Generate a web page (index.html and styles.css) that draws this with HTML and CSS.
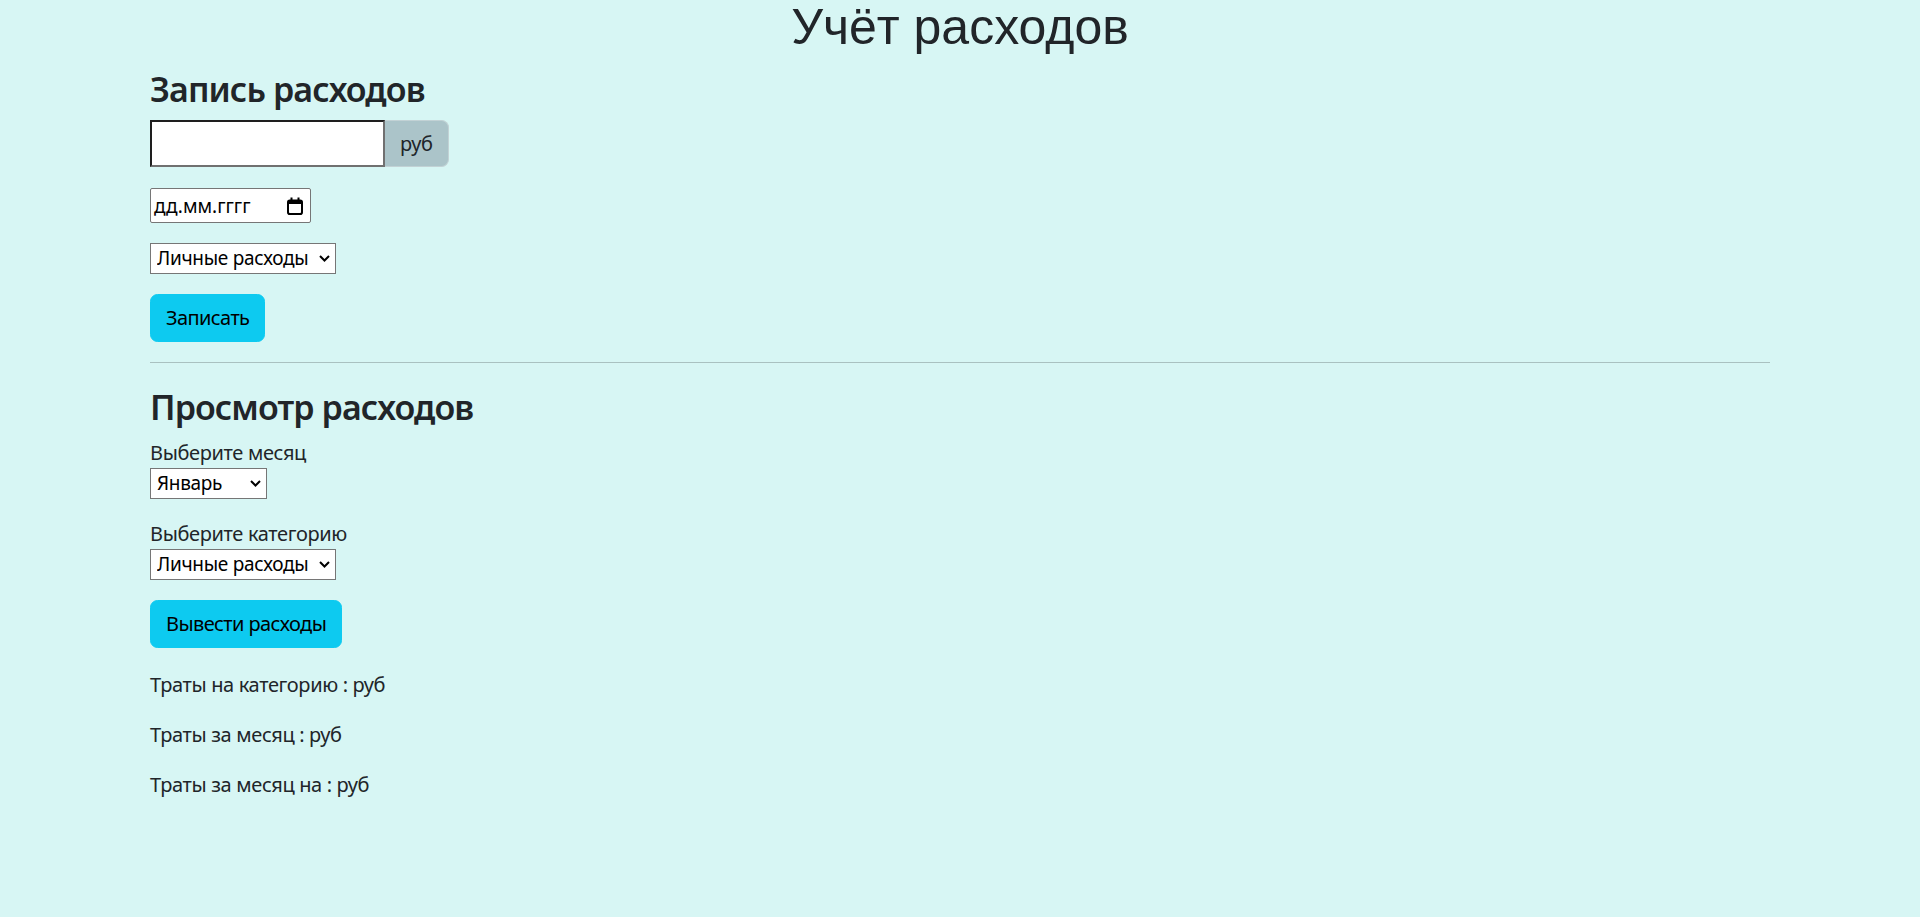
FILE: index.html
```html
<!DOCTYPE html>
<html lang="ru">
<head>
<meta charset="utf-8">
<title>Учёт расходов</title>
<link rel="stylesheet" href="styles.css">
</head>
<body>
<h1 class="title">Учёт расходов</h1>
<main class="container">
  <section class="record">
    <h3 class="section-title">Запись расходов</h3>
    <div class="input-group">
      <input type="text" class="amount">
      <span class="input-group-text">руб</span>
    </div>
    <div class="date-field">
      <span class="date-text">дд.мм.гггг</span>
      <svg class="cal-icon" width="16" height="18" viewBox="0 0 16 18" aria-hidden="true">
        <rect x="1" y="3.5" width="14" height="13.5" rx="1.8" fill="none" stroke="#000" stroke-width="2"/>
        <rect x="1" y="3" width="14" height="4" fill="#000"/>
        <rect x="3.5" y="0.5" width="2" height="4" fill="#000"/>
        <rect x="10.5" y="0.5" width="2" height="4" fill="#000"/>
      </svg>
    </div>
    <div class="select-wrap wide">
      <select class="select"><option>Личные расходы</option></select>
      <svg class="chevron" width="11" height="7" viewBox="0 0 11 7" aria-hidden="true"><path d="M1 1 L5.5 5.5 L10 1" fill="none" stroke="#000" stroke-width="2"/></svg>
    </div>
    <button class="btn">Записать</button>
  </section>
  <hr class="divider">
  <section class="view">
    <h3 class="section-title">Просмотр расходов</h3>
    <label class="label">Выберите месяц</label>
    <div class="select-wrap narrow">
      <select class="select"><option>Январь</option></select>
      <svg class="chevron" width="11" height="7" viewBox="0 0 11 7" aria-hidden="true"><path d="M1 1 L5.5 5.5 L10 1" fill="none" stroke="#000" stroke-width="2"/></svg>
    </div>
    <label class="label">Выберите категорию</label>
    <div class="select-wrap wide">
      <select class="select"><option>Личные расходы</option></select>
      <svg class="chevron" width="11" height="7" viewBox="0 0 11 7" aria-hidden="true"><path d="M1 1 L5.5 5.5 L10 1" fill="none" stroke="#000" stroke-width="2"/></svg>
    </div>
    <button class="btn btn-gap">Вывести расходы</button>
    <p class="result">Траты на категорию : руб</p>
    <p class="result">Траты за месяц : руб</p>
    <p class="result">Траты за месяц на : руб</p>
  </section>
</main>
</body>
</html>
```
FILE: styles.css
```css
html, body {
  margin: 0;
  padding: 0;
}
body {
  background: #d7f6f4;
  color: #212529;
  font-family: "Noto Sans", "Open Sans", sans-serif;
  font-size: 20px;
  line-height: 30px;
  letter-spacing: -0.35px;
}
.title {
  font-family: "Liberation Sans", Arial, sans-serif;
  font-weight: 400;
  font-size: 50px;
  line-height: 55px;
  letter-spacing: 0;
  margin: 0 0 13px;
  text-align: center;
}
.container {
  width: 1620px;
  margin: 0 auto;
}
.section-title {
  font-size: 34px;
  font-weight: 600;
  line-height: 42px;
  letter-spacing: -0.9px;
  margin: 0 0 10px;
}
.input-group {
  display: flex;
  margin-bottom: 21px;
}
.amount {
  box-sizing: border-box;
  width: 235px;
  height: 47px;
  margin: 0;
  padding: 0 4px;
  border: 2px solid;
  border-color: #1e1e1e #707070 #707070 #1e1e1e;
  background: #fff;
  font: inherit;
}
.input-group-text {
  box-sizing: border-box;
  display: flex;
  align-items: center;
  height: 47px;
  padding: 0 15px;
  border: 1px solid #c2d2d5;
  border-left: 0;
  border-radius: 0 7.5px 7.5px 0;
  background: #abc4c9;
}
.date-field {
  box-sizing: border-box;
  display: flex;
  align-items: center;
  justify-content: space-between;
  width: 161px;
  height: 35px;
  margin-bottom: 20px;
  padding: 0 7px 0 3px;
  border: 1px solid #767676;
  border-radius: 2px;
  background: #fff;
  color: #000;
  font-size: 19px;
  letter-spacing: 0;
}
.cal-icon {
  flex: none;
}
.select-wrap {
  position: relative;
  height: 31px;
  margin-bottom: 20px;
}
.select-wrap.wide {
  width: 186px;
}
.select-wrap.narrow {
  width: 117px;
}
.select {
  box-sizing: border-box;
  appearance: none;
  width: 100%;
  height: 100%;
  margin: 0;
  padding: 0 0 0 6px;
  border: 1px solid #767676;
  border-radius: 0;
  background: #fff;
  color: #000;
  font: inherit;
  font-size: 19px;
  letter-spacing: -0.3px;
  line-height: 29px;
}
.chevron {
  position: absolute;
  right: 6px;
  top: 12px;
  pointer-events: none;
}
.btn {
  display: block;
  margin: 0;
  padding: 8px 15px;
  border: 1px solid #0dcaf0;
  border-radius: 7.5px;
  background: #0dcaf0;
  color: #000;
  font: inherit;
  font-size: 20px;
  letter-spacing: -0.6px;
  line-height: 30px;
}
.btn-gap {
  margin-bottom: 22px;
}
.divider {
  margin: 20px 0 23px;
  border: 0;
  border-top: 1px solid #a9c1c0;
  height: 0;
}
.label {
  display: block;
}
.result {
  margin: 0 0 20px;
}
```
